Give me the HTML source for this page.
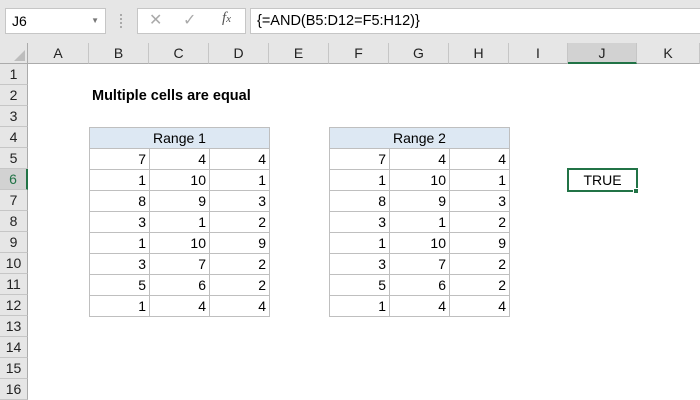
<!DOCTYPE html>
<html><head><style>
*{margin:0;padding:0;box-sizing:border-box}
body{width:700px;height:400px;overflow:hidden;background:#fff;font-family:"Liberation Sans",Arial,sans-serif;font-size:14px;color:#000;position:relative}
.a{position:absolute}
.top{left:0;top:0;width:700px;height:43px;background:#e6e6e6}
.box{background:#fff;border:1px solid #c6c6c6}
.ch{top:43px;height:21px;background:#e6e6e6;border-right:1px solid #c6c6c6;border-bottom:1px solid #ababab;text-align:center;line-height:21px;font-size:14px;color:#222}
.rh{left:0;width:28px;height:21px;background:#e6e6e6;border-bottom:1px solid #c6c6c6;border-right:1px solid #ababab;text-align:center;line-height:21px;color:#222}
table{position:absolute;border-collapse:collapse;top:127px}
td{width:60px;height:21px;border:1px solid #bfbfbf;text-align:right;padding-right:3px;line-height:19px}
th{height:21px;border:1px solid #bfbfbf;background:#dde8f3;font-weight:normal;line-height:19px}
</style></head><body>
<div class="a top"></div>
<div class="a box" style="left:5px;top:8px;width:101px;height:26px;line-height:24px;padding-left:6px">J6<span style="position:absolute;right:6px;top:0;font-size:8px;color:#777">▼</span></div>
<div class="a" style="left:120px;top:14px;width:2px;height:14px;border-left:2px dotted #aaa"></div>
<div class="a box" style="left:137px;top:8px;width:109px;height:26px"></div>
<div class="a" style="left:149px;top:10px;color:#aaa;font-size:16px">✕</div>
<div class="a" style="left:183px;top:10px;color:#aaa;font-size:16px">✓</div>
<div class="a" style="left:222px;top:10px;color:#555;font-family:'Liberation Serif',serif;font-style:italic;font-size:15px">f<span style="font-size:11px">x</span></div>
<div class="a box" style="left:250px;top:8px;width:460px;height:26px;line-height:24px;padding-left:6px;font-size:14.5px">{=AND(B5:D12=F5:H12)}</div>

<div class="a ch" style="left:0;width:28px;border-right:1px solid #ababab"></div>
<div class="a" style="left:14px;top:50px;width:0;height:0;border-left:11px solid transparent;border-bottom:11px solid #bdbdbd"></div>
<div class="a ch" style="left:28px;width:61px">A</div>
<div class="a ch" style="left:89px;width:60px">B</div>
<div class="a ch" style="left:149px;width:60px">C</div>
<div class="a ch" style="left:209px;width:60px">D</div>
<div class="a ch" style="left:269px;width:60px">E</div>
<div class="a ch" style="left:329px;width:60px">F</div>
<div class="a ch" style="left:389px;width:60px">G</div>
<div class="a ch" style="left:449px;width:60px">H</div>
<div class="a ch" style="left:509px;width:59px">I</div>
<div class="a ch" style="left:568px;width:69px;background:#d2d2d2;border-bottom:2px solid #217346">J</div>
<div class="a ch" style="left:637px;width:63px">K</div>

<div class="a rh" style="top:64px">1</div>
<div class="a rh" style="top:85px">2</div>
<div class="a rh" style="top:106px">3</div>
<div class="a rh" style="top:127px">4</div>
<div class="a rh" style="top:148px">5</div>
<div class="a rh" style="top:169px;background:#d2d2d2;border-right:2px solid #217346;color:#217346">6</div>
<div class="a rh" style="top:190px">7</div>
<div class="a rh" style="top:211px">8</div>
<div class="a rh" style="top:232px">9</div>
<div class="a rh" style="top:253px">10</div>
<div class="a rh" style="top:274px">11</div>
<div class="a rh" style="top:295px">12</div>
<div class="a rh" style="top:316px">13</div>
<div class="a rh" style="top:337px">14</div>
<div class="a rh" style="top:358px">15</div>
<div class="a rh" style="top:379px">16</div>

<div class="a" style="left:92px;top:88px;font-weight:bold;font-size:14.5px">Multiple cells are equal</div>

<table style="left:89px">
<tr><th colspan="3">Range 1</th></tr>
<tr><td>7</td><td>4</td><td>4</td></tr>
<tr><td>1</td><td>10</td><td>1</td></tr>
<tr><td>8</td><td>9</td><td>3</td></tr>
<tr><td>3</td><td>1</td><td>2</td></tr>
<tr><td>1</td><td>10</td><td>9</td></tr>
<tr><td>3</td><td>7</td><td>2</td></tr>
<tr><td>5</td><td>6</td><td>2</td></tr>
<tr><td>1</td><td>4</td><td>4</td></tr>
</table>
<table style="left:329px">
<tr><th colspan="3">Range 2</th></tr>
<tr><td>7</td><td>4</td><td>4</td></tr>
<tr><td>1</td><td>10</td><td>1</td></tr>
<tr><td>8</td><td>9</td><td>3</td></tr>
<tr><td>3</td><td>1</td><td>2</td></tr>
<tr><td>1</td><td>10</td><td>9</td></tr>
<tr><td>3</td><td>7</td><td>2</td></tr>
<tr><td>5</td><td>6</td><td>2</td></tr>
<tr><td>1</td><td>4</td><td>4</td></tr>
</table>

<div class="a" style="left:567px;top:168px;width:71px;height:24px;border:2px solid #217346;text-align:center;line-height:20px">TRUE</div>
<div class="a" style="left:633px;top:188px;width:6px;height:6px;background:#217346;border:1px solid #fff"></div>
</body></html>
